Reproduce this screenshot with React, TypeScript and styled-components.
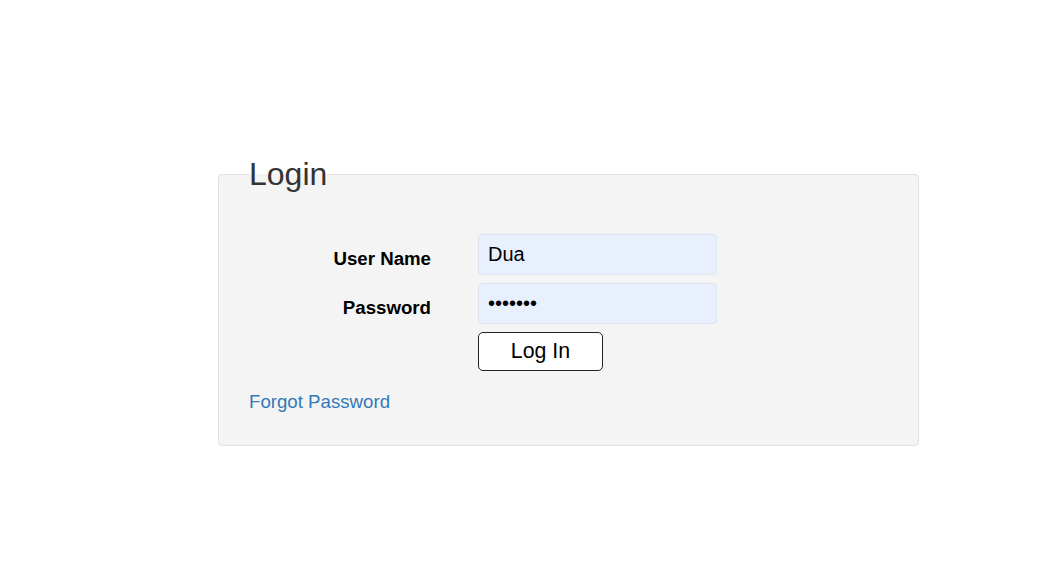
import React from "react";
import styled, { createGlobalStyle } from "styled-components";

const GlobalStyle = createGlobalStyle`
  html, body {
    margin: 0;
    padding: 0;
    background: #ffffff;
    font-family: "Liberation Sans", Arial, sans-serif;
  }
  * { box-sizing: border-box; }
`;

const Page = styled.div`
  padding: 155px 0 0 218px;
  min-height: 574px;
`;

const Panel = styled.fieldset`
  width: 701px;
  margin: 0;
  padding: 0 30px 32px 30px;
  border: 1px solid #e1e1e1;
  border-radius: 4px;
  background: #f4f4f4;
`;

const Legend = styled.legend`
  padding: 0;
  margin: 0;
  font-size: 32px;
  line-height: 38px;
  color: #333333;
  font-weight: normal;
`;

const FormGrid = styled.div`
  display: grid;
  grid-template-columns: 182px 239px;
  grid-auto-rows: auto;
  column-gap: 47px;
  row-gap: 8px;
  margin-top: 41px;
`;

const Label = styled.label`
  justify-self: end;
  align-self: start;
  margin-top: 14px;
  font-size: 18.67px;
  font-weight: bold;
  color: #000000;
`;

const Input = styled.input`
  width: 239px;
  height: 41px;
  padding: 0 9px;
  border: 1px solid #dde5f1;
  border-radius: 4px;
  background: #e8f0fe;
  font-family: "Liberation Sans", Arial, sans-serif;
  font-size: 20px;
  color: #000000;
  outline: none;
`;

const Button = styled.button`
  grid-column: 2;
  width: 125px;
  height: 39px;
  border: 1px solid #222222;
  border-radius: 5px;
  background: #ffffff;
  font-family: "Liberation Sans", Arial, sans-serif;
  font-size: 21.33px;
  color: #000000;
  padding: 0;
  cursor: pointer;
`;

const ForgotLink = styled.a`
  display: inline-block;
  margin-top: 20px;
  font-size: 18.67px;
  color: #337ab7;
  text-decoration: none;
`;

export default function App() {
  return (
    <>
      <GlobalStyle />
      <Page>
        <Panel>
          <Legend>Login</Legend>
          <FormGrid>
            <Label htmlFor="user">User Name</Label>
            <Input id="user" type="text" defaultValue="Dua" />
            <Label htmlFor="pass">Password</Label>
            <Input id="pass" type="password" defaultValue="1234567" />
            <Button type="button">Log In</Button>
          </FormGrid>
          <ForgotLink href="#">Forgot Password</ForgotLink>
        </Panel>
      </Page>
    </>
  );
}
